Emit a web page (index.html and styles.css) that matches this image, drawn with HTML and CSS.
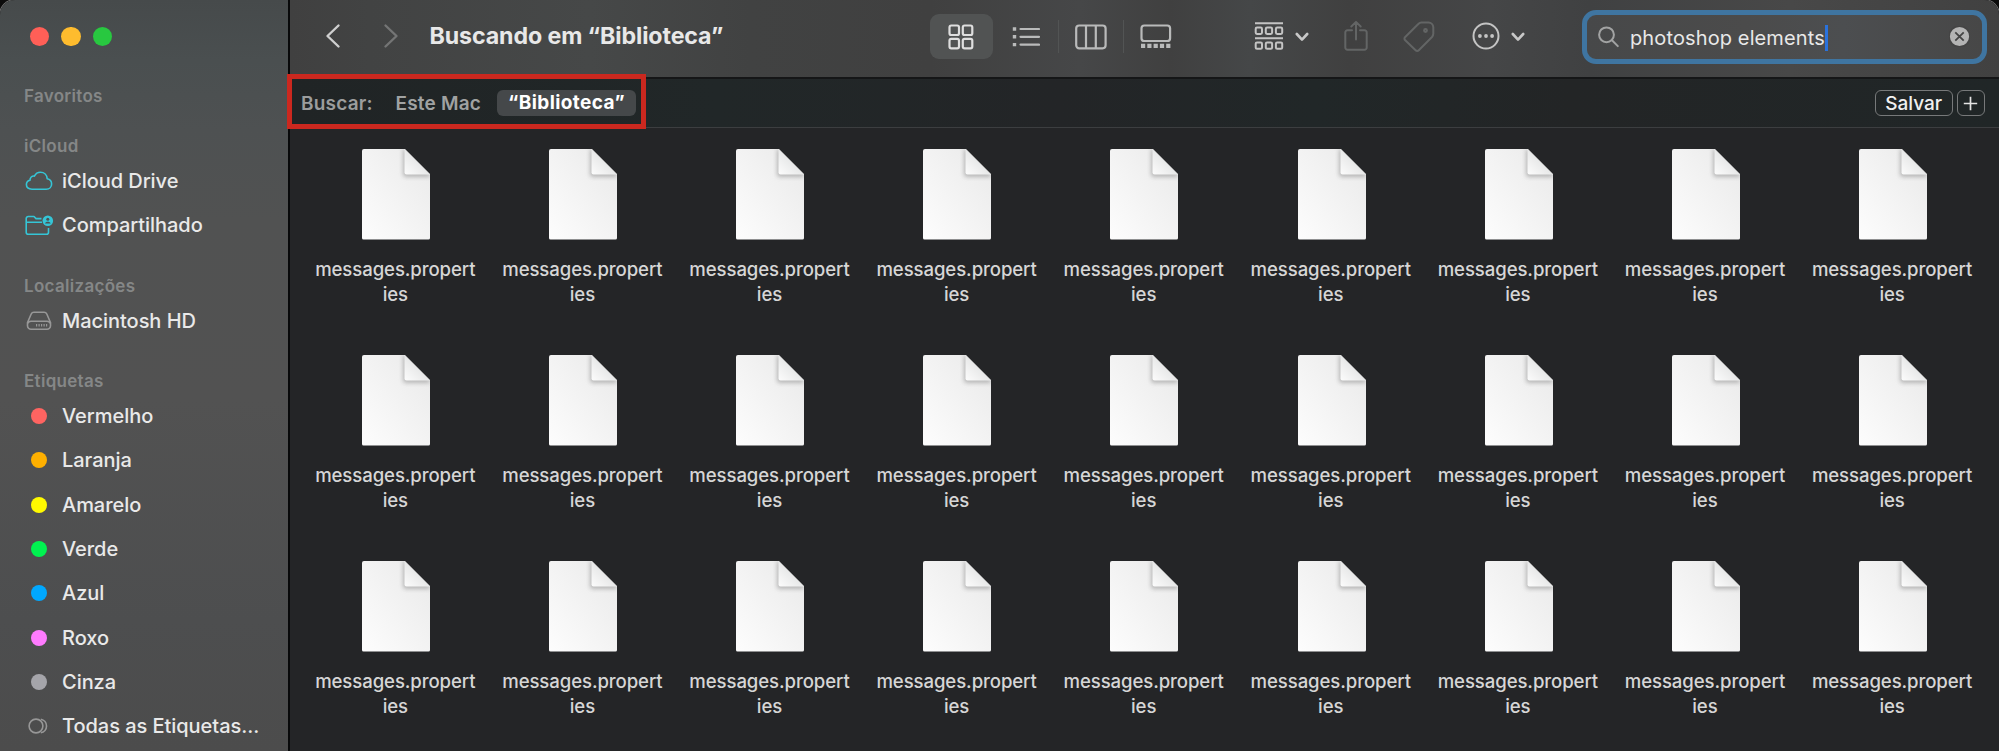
FILE: index.html
```
<!DOCTYPE html>
<html lang="pt-BR">
<head>
    <meta charset="UTF-8">
    <title>Buscando em “Biblioteca”</title>
    <link rel="stylesheet" href="styles.css">
</head>
<body>
    <svg class="defs" width="0" height="0">
        <defs>
            <linearGradient id="paper" x1="1" y1="0" x2="0" y2="1">
                <stop offset="0" stop-color="#e9e9e9"/>
                <stop offset="1" stop-color="#fdfdfd"/>
            </linearGradient>
            <linearGradient id="fold" x1="1" y1="0" x2="0" y2="1">
                <stop offset="0.4" stop-color="#e4e5e5"/>
                <stop offset="1" stop-color="#fcfcfc"/>
            </linearGradient>
            <filter id="soft" x="-30%" y="-30%" width="160%" height="160%">
                <feGaussianBlur stdDeviation="2"/>
            </filter>
            <clipPath id="page">
                <path d="M2 0H43L68 25V89a1.5 1.5 0 0 1-1.500 1.500H1.500A1.500 1.500 0 0 1 0 89V2A2 2 0 0 1 2 0z"/>
            </clipPath>
        </defs>
        <symbol id="file" viewBox="0 0 68 91">
            <g clip-path="url(#page)">
                <rect width="68" height="91" fill="url(#paper)"/>
                <path d="M41 0V25a3 3 0 0 0 3 3H68V25L43 0z" fill="#808080" opacity="0.5" filter="url(#soft)"/>
                <path d="M42.500 0V23.500a2 2 0 0 0 2 2H68z" fill="url(#fold)"/>
            </g>
        </symbol>
        <symbol id="chevron" viewBox="0 0 14 10">
            <path d="M1.800 2L7 7.600L12.200 2" fill="none" stroke="currentColor" stroke-width="2.600" stroke-linecap="round" stroke-linejoin="round"/>
        </symbol>
    </svg>

    <div class="window">
        <aside class="sidebar">
            <div class="traffic-lights">
                <span class="light close"></span>
                <span class="light minimize"></span>
                <span class="light zoom"></span>
            </div>

            <section class="group">
                <h2>Favoritos</h2>
            </section>

            <section class="group">
                <h2>iCloud</h2>
                <div class="item">
                    <svg class="icon cyan" width="28" height="20" viewBox="0 0 28 20">
                        <path d="M7 18.200C3.600 18.200 1.400 16.300 1.400 13.600C1.400 11.300 2.900 9.700 5 9.300C4.900 6.500 6.900 4.700 9.400 5.100C10.600 2.700 12.700 1.300 15.400 1.300C19.200 1.300 22 4 22.200 7.800C24.800 8.300 26.600 10.200 26.600 12.900C26.600 16 24.400 18.200 21.200 18.200z"/>
                    </svg>
                    <span>iCloud Drive</span>
                </div>
                <div class="item">
                    <svg class="icon cyan" width="28" height="21" viewBox="0 0 28 21">
                        <path d="M16.500 3.600H11L9 1.500H3.200A2 2 0 0 0 1.200 3.500V17.200A2 2 0 0 0 3.200 19.200H21.500A2 2 0 0 0 23.500 17.200V13M1.200 7.300H17"/>
                        <circle cx="22.800" cy="5.700" r="5.300" class="solid"/>
                        <circle cx="22.800" cy="4.200" r="1.500" class="cutout"/>
                        <path d="M20 8.400C20.400 6.300 25.200 6.300 25.600 8.400z" class="cutout"/>
                    </svg>
                    <span>Compartilhado</span>
                </div>
            </section>

            <section class="group">
                <h2>Localizações</h2>
                <div class="item">
                    <svg class="icon gray" width="26" height="20" viewBox="0 0 26 20">
                        <path d="M1.500 11.500L5.200 3A3 3 0 0 1 8 1.200H18A3 3 0 0 1 20.800 3L24.500 11.500V14.800A3.500 3.500 0 0 1 21 18.300H5A3.500 3.500 0 0 1 1.500 14.800zM1.700 12.500A3.500 3.500 0 0 1 5 10.200H21A3.500 3.500 0 0 1 24.300 12.500"/>
                        <path d="M10 14.300H22" stroke-dasharray="1.200 1.300" stroke-width="2.600"/>
                    </svg>
                    <span>Macintosh HD</span>
                </div>
            </section>

            <section class="group">
                <h2>Etiquetas</h2>
                <div class="item"><i class="tag red"></i><span>Vermelho</span></div>
                <div class="item"><i class="tag orange"></i><span>Laranja</span></div>
                <div class="item"><i class="tag yellow"></i><span>Amarelo</span></div>
                <div class="item"><i class="tag green"></i><span>Verde</span></div>
                <div class="item"><i class="tag blue"></i><span>Azul</span></div>
                <div class="item"><i class="tag purple"></i><span>Roxo</span></div>
                <div class="item"><i class="tag silver"></i><span>Cinza</span></div>
                <div class="item">
                    <svg class="icon gray" width="22" height="18" viewBox="0 0 22 18">
                        <circle cx="8" cy="9" r="6.900"/>
                        <path d="M12.800 2.200A6.900 6.900 0 0 1 12.800 15.800"/>
                    </svg>
                    <span>Todas as Etiquetas...</span>
                </div>
            </section>
        </aside>

        <main class="main">
            <header class="toolbar">
                <svg class="nav back" width="16" height="26" viewBox="0 0 16 26"><path d="M13.500 2.500L2.500 13L13.500 23.500"/></svg>
                <svg class="nav forward" width="16" height="26" viewBox="0 0 16 26"><path d="M2.500 2.500L13.500 13L2.500 23.500"/></svg>
                <h1>Buscando em “Biblioteca”</h1>

                <div class="views">
                    <div class="view selected">
                        <svg width="26" height="26" viewBox="0 0 26 26">
                            <rect x="1.500" y="1.500" width="9.500" height="9.500" rx="1.800"/>
                            <rect x="14.800" y="1.500" width="9.500" height="9.500" rx="1.800"/>
                            <rect x="1.500" y="14.800" width="9.500" height="9.500" rx="1.800"/>
                            <rect x="14.800" y="14.800" width="9.500" height="9.500" rx="1.800"/>
                        </svg>
                    </div>
                    <div class="view">
                        <svg width="28" height="22" viewBox="0 0 28 22">
                            <path d="M8.500 3H27M8.500 10.800H27M8.500 18.600H27" stroke-linecap="round"/>
                            <path d="M0.800 3H4.200M0.800 10.800H4.200M0.800 18.600H4.200" stroke-width="3.400"/>
                        </svg>
                    </div>
                    <div class="view divided">
                        <svg width="32" height="26" viewBox="0 0 32 26">
                            <rect x="1.200" y="1.500" width="29.400" height="22.800" rx="3"/>
                            <path d="M11 1.500V24.300M20.800 1.500V24.300"/>
                        </svg>
                    </div>
                    <div class="view divided">
                        <svg width="32" height="26" viewBox="0 0 32 26">
                            <rect x="1.500" y="1.500" width="28.600" height="15.500" rx="2.800"/>
                            <path d="M1 21.800H31" stroke-width="4.200" stroke-dasharray="4.200 2.100"/>
                        </svg>
                    </div>
                </div>

                <div class="action arrange">
                    <svg width="30" height="30" viewBox="0 0 30 30">
                        <path d="M1 2.200H29M1 17.200H29"/>
                        <rect x="1.700" y="6.600" width="6.300" height="6.300" rx="1.300"/>
                        <rect x="11.800" y="6.600" width="6.300" height="6.300" rx="1.300"/>
                        <rect x="21.900" y="6.600" width="6.300" height="6.300" rx="1.300"/>
                        <rect x="1.700" y="21.500" width="6.300" height="6.300" rx="1.300"/>
                        <rect x="11.800" y="21.500" width="6.300" height="6.300" rx="1.300"/>
                        <rect x="21.900" y="21.500" width="6.300" height="6.300" rx="1.300"/>
                    </svg>
                    <svg class="caret-down" width="14" height="10"><use href="#chevron"/></svg>
                </div>
                <svg class="action share" width="24" height="32" viewBox="0 0 24 32">
                    <path d="M8 10.200H3.500A2.200 2.200 0 0 0 1.300 12.400V27.600A2.200 2.200 0 0 0 3.500 29.800H20.500A2.200 2.200 0 0 0 22.700 27.600V12.400A2.200 2.200 0 0 0 20.500 10.200H16M12 19.500V2M7.300 6.500L12 1.900L16.700 6.500"/>
                </svg>
                <svg class="action label" width="32" height="32" viewBox="0 0 32 32">
                    <path d="M2 16.300L15.300 3A4.500 4.500 0 0 1 18.500 1.600H25.500A5 5 0 0 1 30.300 6.400V12.800A5 5 0 0 1 29 16L15.800 29.300A2.200 2.200 0 0 1 12.600 29.300L2 19A1.900 1.900 0 0 1 2 16.300z"/>
                    <circle cx="22.500" cy="9.500" r="1.400"/>
                </svg>
                <div class="action more">
                    <svg width="28" height="28" viewBox="0 0 28 28">
                        <circle cx="14" cy="14" r="12.500"/>
                        <g class="dots"><circle cx="7.900" cy="14" r="1.900"/><circle cx="14" cy="14" r="1.900"/><circle cx="20.100" cy="14" r="1.900"/></g>
                    </svg>
                    <svg class="caret-down" width="14" height="10"><use href="#chevron"/></svg>
                </div>

                <div class="search">
                    <svg class="magnifier" width="21" height="22" viewBox="0 0 21 22">
                        <circle cx="8.500" cy="8.800" r="7.400"/>
                        <path d="M14 14.300L19.800 20.100"/>
                    </svg>
                    <span class="query">photoshop elements</span><span class="cursor"></span>
                    <svg class="clear" width="21" height="21" viewBox="0 0 21 21">
                        <circle cx="10.500" cy="10.500" r="10.500"/>
                        <path d="M6.300 6.300L14.700 14.700M14.700 6.300L6.300 14.700"/>
                    </svg>
                </div>
            </header>

            <div class="scope-bar">
                <span class="scope-title">Buscar:</span>
                <span class="scope">Este Mac</span>
                <span class="scope active">“Biblioteca”</span>
                <button class="btn save">Salvar</button>
                <button class="btn add">
                    <svg width="15" height="15" viewBox="0 0 15 15"><path d="M7.500 0.800V14.200M0.800 7.500H14.200"/></svg>
                </button>
                <div class="highlight"></div>
            </div>

            <div class="files">
                <div class="file"><svg width="68" height="91"><use href="#file"/></svg><span>messages.properties</span></div>
                <div class="file"><svg width="68" height="91"><use href="#file"/></svg><span>messages.properties</span></div>
                <div class="file"><svg width="68" height="91"><use href="#file"/></svg><span>messages.properties</span></div>
                <div class="file"><svg width="68" height="91"><use href="#file"/></svg><span>messages.properties</span></div>
                <div class="file"><svg width="68" height="91"><use href="#file"/></svg><span>messages.properties</span></div>
                <div class="file"><svg width="68" height="91"><use href="#file"/></svg><span>messages.properties</span></div>
                <div class="file"><svg width="68" height="91"><use href="#file"/></svg><span>messages.properties</span></div>
                <div class="file"><svg width="68" height="91"><use href="#file"/></svg><span>messages.properties</span></div>
                <div class="file"><svg width="68" height="91"><use href="#file"/></svg><span>messages.properties</span></div>

                <div class="file"><svg width="68" height="91"><use href="#file"/></svg><span>messages.properties</span></div>
                <div class="file"><svg width="68" height="91"><use href="#file"/></svg><span>messages.properties</span></div>
                <div class="file"><svg width="68" height="91"><use href="#file"/></svg><span>messages.properties</span></div>
                <div class="file"><svg width="68" height="91"><use href="#file"/></svg><span>messages.properties</span></div>
                <div class="file"><svg width="68" height="91"><use href="#file"/></svg><span>messages.properties</span></div>
                <div class="file"><svg width="68" height="91"><use href="#file"/></svg><span>messages.properties</span></div>
                <div class="file"><svg width="68" height="91"><use href="#file"/></svg><span>messages.properties</span></div>
                <div class="file"><svg width="68" height="91"><use href="#file"/></svg><span>messages.properties</span></div>
                <div class="file"><svg width="68" height="91"><use href="#file"/></svg><span>messages.properties</span></div>

                <div class="file"><svg width="68" height="91"><use href="#file"/></svg><span>messages.properties</span></div>
                <div class="file"><svg width="68" height="91"><use href="#file"/></svg><span>messages.properties</span></div>
                <div class="file"><svg width="68" height="91"><use href="#file"/></svg><span>messages.properties</span></div>
                <div class="file"><svg width="68" height="91"><use href="#file"/></svg><span>messages.properties</span></div>
                <div class="file"><svg width="68" height="91"><use href="#file"/></svg><span>messages.properties</span></div>
                <div class="file"><svg width="68" height="91"><use href="#file"/></svg><span>messages.properties</span></div>
                <div class="file"><svg width="68" height="91"><use href="#file"/></svg><span>messages.properties</span></div>
                <div class="file"><svg width="68" height="91"><use href="#file"/></svg><span>messages.properties</span></div>
                <div class="file"><svg width="68" height="91"><use href="#file"/></svg><span>messages.properties</span></div>
            </div>
        </main>
    </div>
</body>
</html>
```
FILE: styles.css
```
* {
    margin: 0;
    padding: 0;
    box-sizing: border-box;
}

body {
    font-family: Inter, "Liberation Sans", sans-serif;
    background: #0c0c0c;
    color: #e8e8e8;
    height: 751px;
    overflow: hidden;
}

svg {
    display: block;
    flex: none;
    fill: none;
}

.defs {
    position: absolute;
}

.window {
    display: flex;
    height: 751px;
    border-radius: 15px 15px 0 0;
    overflow: hidden;
    box-shadow: 0 0 0 1px #707070;
}

/* Sidebar */
.sidebar {
    width: 290px;
    flex: none;
    border-right: 2px solid #08090a;
    background: linear-gradient(#464a4b 0, #4a4f50 60px, #4e5152 130px, #515252 220px, #525252 400px, #4d4e4f 620px, #4c4c4c 751px);
}

.traffic-lights {
    display: flex;
    gap: 12.2px;
    padding: 26.5px 0 0 29.5px;
    height: 81.5px;
}

.light {
    width: 19.5px;
    height: 19.5px;
    border-radius: 50%;
}

.close { background: #ff5f57; }
.minimize { background: #febc2e; }
.zoom { background: #28c840; }

.group {
    margin-bottom: 23.2px;
}

.group h2 {
    height: 27px;
    padding-left: 24px;
    font-size: 17px;
    font-weight: 600;
    line-height: 28px;
    letter-spacing: 0.3px;
    color: #858787;
}

.group:first-of-type {
    margin-bottom: 23.5px;
}

.item + .item {
    margin-top: 0;
}

.item {
    display: flex;
    align-items: center;
    height: 44.3px;
    padding-left: 23px;
    font-size: 20px;
    font-weight: 500;
    letter-spacing: -0.04px;
    color: #e9e9e9;
}

.item:last-child {
    margin-bottom: 24px;
}

.item span {
    white-space: nowrap;
}

.item .icon {
    width: 32px;
    margin-right: 7px;
    stroke-width: 1.6;
    stroke-linejoin: round;
}

.cyan { stroke: #35c5d6; }
.cyan .solid { fill: #35c5d6; stroke: none; }
.cyan .cutout { fill: #4f5152; stroke: none; }
.gray { stroke: #979797; }

.tag {
    width: 16px;
    height: 16px;
    margin: 0 15px 0 8px;
    border-radius: 50%;
}

.red { background: #ff6461; }
.orange { background: #ffb000; }
.yellow { background: #fffa00; }
.green { background: #00f250; }
.blue { background: #00a8ff; }
.purple { background: #ff7bff; }
.silver { background: #a5a5aa; }

/* Toolbar */
.main {
    flex: 1;
    min-width: 0;
    background: #242527;
}

.toolbar {
    display: flex;
    height: 79px;
    border-bottom: 2px solid #151617;
    background: linear-gradient(90deg, #404040 0, #424343 80px, #464848 300px, #414242 460px, #404040 640px, #464748 790px, #404040 880px, #454748 960px, #404040 1060px, #454647 1200px, #404142 1300px, #484848 1500px, #414141 1709px);
}

.nav {
    margin-top: 22.5px;
    stroke-width: 2.4;
    stroke-linecap: round;
    stroke-linejoin: round;
}

.back {
    margin-left: 35px;
    stroke: #cfcfcf;
}

.forward {
    margin-left: 42px;
    stroke: #747575;
}

.toolbar h1 {
    width: 500px;
    margin-left: 30.5px;
    font-size: 23.2px;
    font-weight: 700;
    letter-spacing: -0.1px;
    line-height: 72px;
    white-space: nowrap;
}

.views {
    display: flex;
    margin-top: 14px;
    height: 45px;
    stroke: #b9baba;
    stroke-width: 2.2;
}

.view {
    display: flex;
    align-items: center;
    justify-content: center;
    width: 65.2px;
}

.view.selected {
    width: 63.5px;
    border-radius: 9px;
    background: #515353;
    stroke: #dedede;
}

.view.divided {
    position: relative;
}

.view.divided::before {
    content: "";
    position: absolute;
    left: 0;
    top: 6px;
    width: 1px;
    height: 33px;
    background: #525454;
}

.action {
    display: flex;
    align-items: center;
    stroke: #c4c4c4;
    stroke-width: 2;
}

.arrange {
    height: 71px;
    margin-left: 65px;
}

.caret-down {
    margin: 2px 0 0 11px;
    color: #c8c8c8;
}

.share,
.label {
    stroke: #636565;
    stroke-linecap: round;
    stroke-linejoin: round;
}

.share {
    margin: 19.5px 0 0 35.5px;
}

.label {
    margin: 20.5px 0 0 35px;
}

.more {
    height: 72px;
    margin-left: 36.5px;
}

.dots {
    fill: #c4c4c4;
    stroke: none;
}

.search {
    display: flex;
    width: 405px;
    height: 54px;
    margin: 9.5px 12px 0 auto;
    padding-left: 10.5px;
    border: 5.5px solid #3f75a1;
    border-radius: 14px;
    background: linear-gradient(90deg, #474849, #4b4b4b 40%, #4c4e50 65%, #474747);
}

.magnifier {
    margin-top: 11.5px;
    stroke: #a2a3a3;
    stroke-width: 2;
    stroke-linecap: round;
}

.query {
    margin-left: 11.5px;
    font-size: 20px;
    font-weight: 400;
    letter-spacing: 0.12px;
    line-height: 47px;
    white-space: nowrap;
}

.cursor {
    width: 3px;
    height: 26px;
    margin-top: 10.5px;
    background: #2a72dc;
}

.clear {
    margin: 11px 12px 0 auto;
    fill: #b4b4b4;
    stroke: #444;
    stroke-width: 1.8;
}

/* Scope bar */
.scope-bar {
    position: relative;
    display: flex;
    align-items: center;
    height: 49px;
    padding: 0 14px 0 11px;
    border-bottom: 1.5px solid #3c3e40;
    background: linear-gradient(90deg, #202425, #212728 25%, #232527 45%, #212728 60%, #232526 75%, #202627);
    font-size: 19px;
    font-weight: 600;
    letter-spacing: 0.2px;
    white-space: nowrap;
}

.scope-title {
    width: 94.5px;
    color: #9b9d9d;
}

.scope {
    width: 101.5px;
    color: #a0a2a2;
}

.scope.active {
    width: 139px;
    height: 26px;
    border-radius: 6px;
    background: #45484a;
    color: #fff;
    font-weight: 700;
    letter-spacing: 0.4px;
    line-height: 25px;
    text-align: center;
}

.btn {
    display: flex;
    align-items: center;
    justify-content: center;
    height: 26px;
    border: 1.5px solid #77797a;
    border-radius: 6px;
    background: none;
    color: #f0f0f0;
    font-family: inherit;
    font-size: 19px;
    font-weight: 500;
}

.save {
    width: 77.5px;
    margin-left: auto;
}

.add {
    width: 28.5px;
    margin-left: 4px;
    stroke: #e4e4e4;
    stroke-width: 1.7;
}

.highlight {
    position: absolute;
    left: -3px;
    top: -5px;
    width: 359px;
    height: 55px;
    border: 5px solid #cb281f;
}

/* Files */
.files {
    display: grid;
    grid-template-columns: repeat(9, 187.1px);
    grid-auto-rows: 206px;
    padding: 21px 0 0 12.5px;
}

.file {
    display: flex;
    flex-direction: column;
    align-items: center;
}

.file span {
    width: 164px;
    margin: 16.5px 1.5px 0 0;
    font-size: 18.6px;
    font-weight: 500;
    letter-spacing: -0.1px;
    line-height: 25.2px;
    text-align: center;
    word-break: break-all;
    color: #d6d6d6;
}
```
